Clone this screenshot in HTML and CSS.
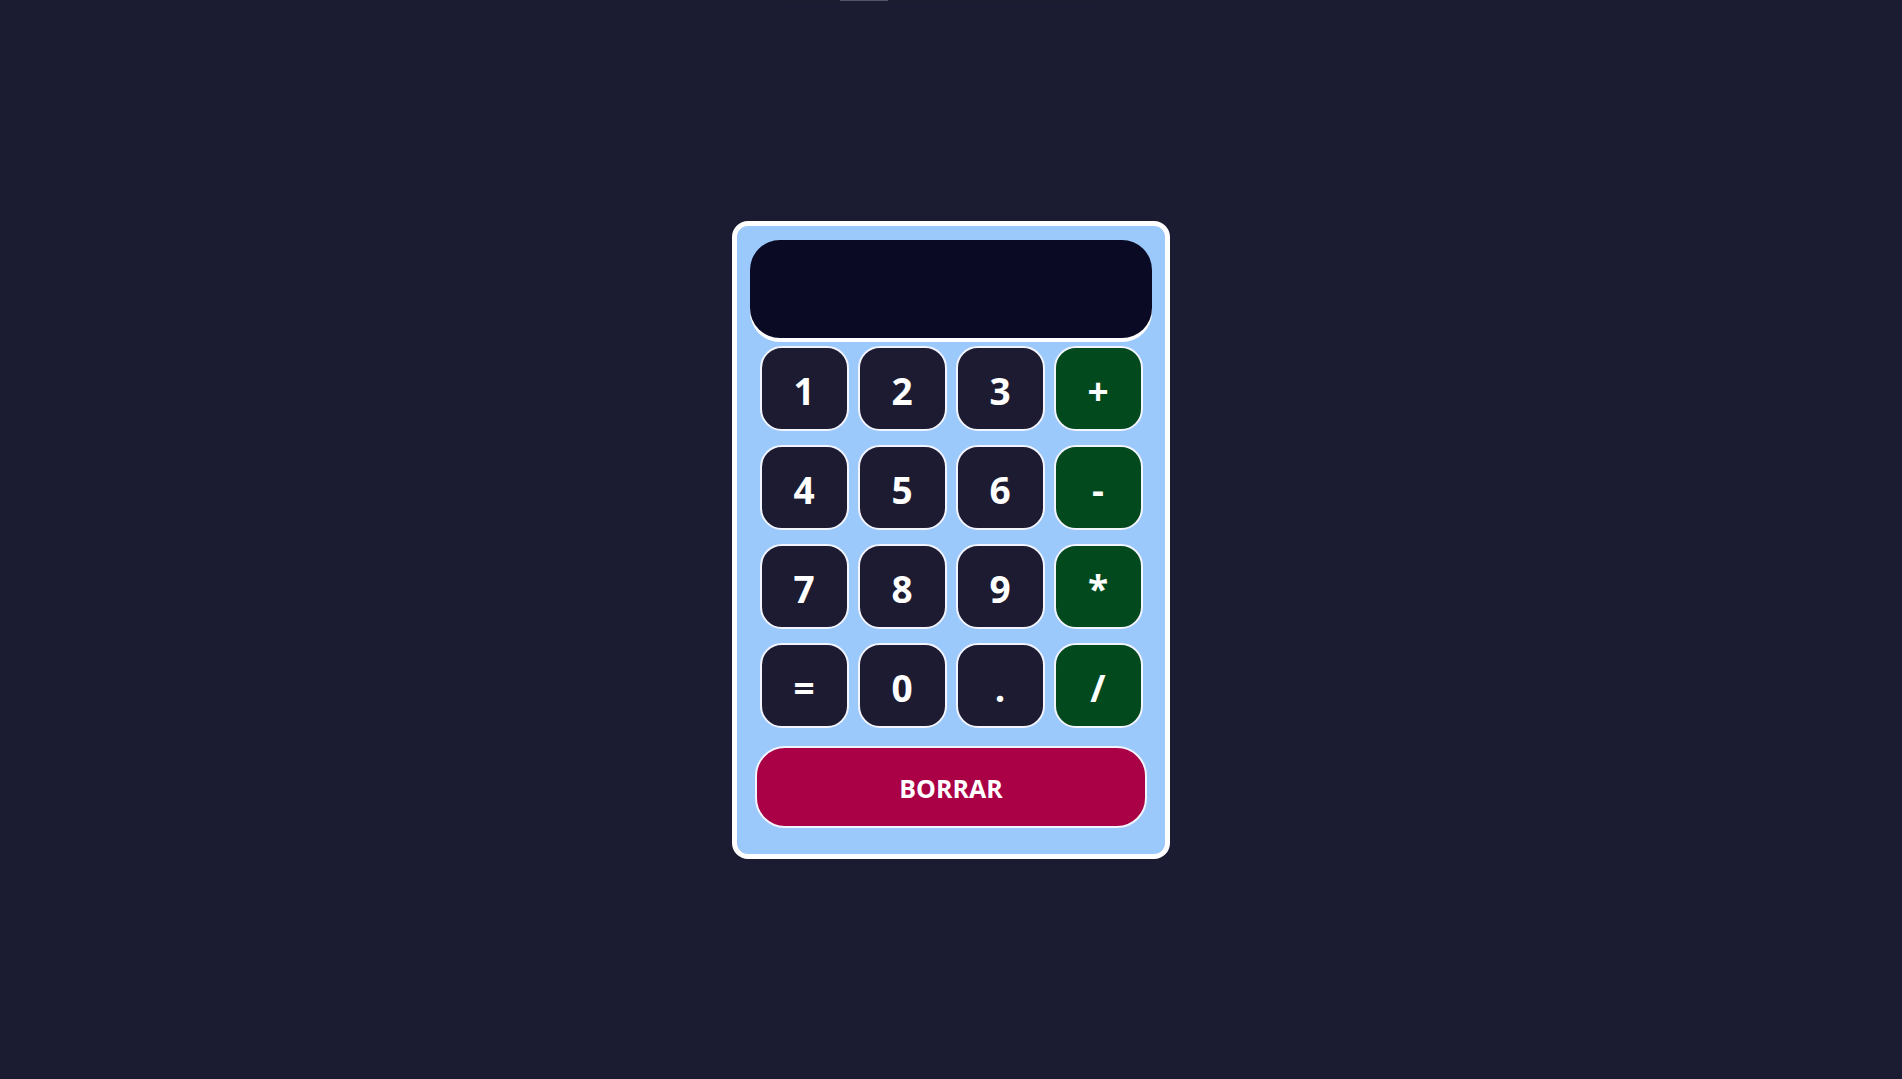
FILE: index.html
```html
<!DOCTYPE html>
<html lang="es">
<head>
<meta charset="utf-8">
<title>Calculadora</title>
<link rel="stylesheet" href="styles.css">
</head>
<body>
<div class="topstrip"><span class="topstrip-tab"></span></div>
<main class="page">
  <div class="calc">
    <div class="display"></div>
    <div class="keys">
      <button class="key">1</button>
      <button class="key">2</button>
      <button class="key">3</button>
      <button class="key op">+</button>
      <button class="key">4</button>
      <button class="key">5</button>
      <button class="key">6</button>
      <button class="key op">-</button>
      <button class="key">7</button>
      <button class="key">8</button>
      <button class="key">9</button>
      <button class="key op">*</button>
      <button class="key">=</button>
      <button class="key">0</button>
      <button class="key">.</button>
      <button class="key op">/</button>
    </div>
    <button class="clear">BORRAR</button>
  </div>
</main>
</body>
</html>
```
FILE: styles.css
```css
* { box-sizing: border-box; }
html, body {
  margin: 0;
  height: 100%;
  background: #1b1b32;
  font-family: "Open Sans", "Noto Sans", sans-serif;
}
.topstrip {
  position: absolute;
  top: 0;
  left: 780px;
  width: 320px;
  height: 1px;
  background: #1e1e2c;
}
.topstrip-tab {
  position: absolute;
  left: 60px;
  top: 0;
  width: 48px;
  height: 1px;
  background: #55556a;
}
.page {
  height: 100%;
  display: flex;
  align-items: center;
  justify-content: center;
}
.calc {
  width: 438px;
  height: 638px;
  background: #9bc9fc;
  border: 5px solid #ffffff;
  border-radius: 16px;
  padding: 14px 13px 0;
  display: flex;
  flex-direction: column;
  align-items: center;
}
.display {
  width: 402px;
  height: 98px;
  background: #0a0a24;
  border-radius: 30px;
  box-shadow: 0 4px 0 0 #ffffff;
  flex: none;
}
.keys {
  margin-top: 8px;
  display: grid;
  grid-template-columns: repeat(4, 89px);
  grid-auto-rows: 85px;
  column-gap: 9px;
  row-gap: 14px;
}
.key {
  background: #1c1b31;
  color: #ffffff;
  border: 2px solid #f2f4ff;
  border-radius: 22px;
  font-family: inherit;
  font-weight: 700;
  font-size: 37px;
  line-height: 1;
  padding: 4px 0 0;
  display: flex;
  align-items: center;
  justify-content: center;
}
.key.op {
  background: #024a1e;
}
.clear {
  margin-top: 18px;
  width: 392px;
  height: 82px;
  background: #a90046;
  color: #ffffff;
  border: 2px solid #f2f4ff;
  border-radius: 30px;
  font-family: inherit;
  font-weight: 700;
  font-size: 25px;
  padding: 2px 0 0;
}
```
